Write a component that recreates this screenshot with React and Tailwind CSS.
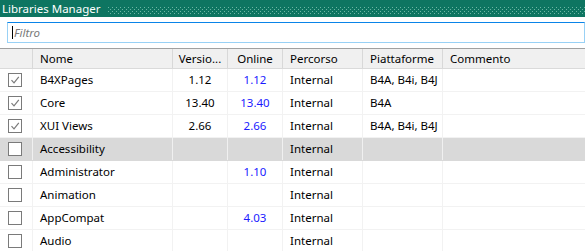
import React from "react";

const cols = "grid grid-cols-[33px_140px_55px_55px_80px_80px_1fr]";

const rows = [
  { c: true, n: "B4XPages", v: "1.12", o: "1.12", p: "Internal", pl: "B4A, B4i, B4J" },
  { c: true, n: "Core", v: "13.40", o: "13.40", p: "Internal", pl: "B4A" },
  { c: true, n: "XUI Views", v: "2.66", o: "2.66", p: "Internal", pl: "B4A, B4i, B4J" },
  { c: false, n: "Accessibility", v: "", o: "", p: "Internal", pl: "", sel: true },
  { c: false, n: "Administrator", v: "", o: "1.10", p: "Internal", pl: "" },
  { c: false, n: "Animation", v: "", o: "", p: "Internal", pl: "" },
  { c: false, n: "AppCompat", v: "", o: "4.03", p: "Internal", pl: "" },
  { c: false, n: "Audio", v: "", o: "", p: "Internal", pl: "" },
];

function Check({ on }) {
  return (
    <div className="w-[14px] h-[14px] border border-[#7a7a7a] bg-white flex items-center justify-center">
      {on && (
        <svg width="10" height="10" viewBox="0 0 10 10">
          <path d="M1.5 5.2 L4 7.8 L8.8 1.8" fill="none" stroke="#7a7a7a" strokeWidth="1.2" />
        </svg>
      )}
    </div>
  );
}

export default function App() {
  return (
    <div className="w-[585px] h-[251px] overflow-hidden bg-white text-black text-[11.5px] leading-none" style={{ fontFamily: '"Noto Sans", "Segoe UI", sans-serif' }}>
      <div className="h-[17px] bg-[#0e7561] flex items-center">
        <span className="pl-[2px] text-white text-[11.5px] whitespace-nowrap">Libraries Manager</span>
        <svg className="ml-[7px] flex-1" height="12" width="490">
          <defs>
            <pattern id="dots" width="4" height="4" patternUnits="userSpaceOnUse">
              <rect x="0" y="0" width="1" height="1" fill="#6bb5a4" />
              <rect x="2" y="2" width="1" height="1" fill="#6bb5a4" />
            </pattern>
          </defs>
          <rect x="0" y="4" width="490" height="7" fill="url(#dots)" />
        </svg>
      </div>
      <div className="h-[5px]" />
      <div className="ml-[7px] h-[21px] border border-[#99d1f5] border-t-[#0a84e8] flex items-center pl-[4px]">
        <div className="w-px h-[13px] bg-black" />
        <span className="italic text-[#7a7a7a] pl-[1px]">Filtro</span>
      </div>
      <div className="h-[5px]" />
      <div className={`${cols} h-[21px] bg-[#f0f0f0] border-t border-[#a0a0a0] border-b border-b-[#dadada]`}>
        {["", "Nome", "Versio...", "Online", "Percorso", "Piattaforme", "Commento"].map((h, i) => (
          <div key={i} className={`flex items-center ${i === 2 || i === 3 ? "justify-center" : "pl-[7px]"} ${i < 6 ? "border-r border-[#d8d8d8]" : ""}`}>
            {h}
          </div>
        ))}
      </div>
      {rows.map((r, i) => (
        <div key={i} className={`${cols} h-[23px] border-b ${r.sel ? "bg-[#d9d9d9] border-[#d9d9d9]" : "bg-white border-[#f2f2f2]"}`}>
          <div className={`flex items-center pl-[8px] border-r ${r.sel ? "border-[#f0f0f0]" : "border-[#f2f2f2]"}`}>
            <Check on={r.c} />
          </div>
          <div className={`flex items-center pl-[7px] border-r ${r.sel ? "border-[#f0f0f0]" : "border-[#f2f2f2]"}`}>{r.n}</div>
          <div className={`flex items-center justify-center border-r ${r.sel ? "border-[#f0f0f0]" : "border-[#f2f2f2]"}`}>{r.v}</div>
          <div className={`flex items-center justify-center text-[#1a1aff] border-r ${r.sel ? "border-[#f0f0f0]" : "border-[#f2f2f2]"}`}>{r.o}</div>
          <div className={`flex items-center pl-[7px] border-r ${r.sel ? "border-[#f0f0f0]" : "border-[#f2f2f2]"}`}>{r.p}</div>
          <div className={`flex items-center pl-[7px] border-r ${r.sel ? "border-[#f0f0f0]" : "border-[#f2f2f2]"}`}>{r.pl}</div>
          <div />
        </div>
      ))}
    </div>
  );
}
